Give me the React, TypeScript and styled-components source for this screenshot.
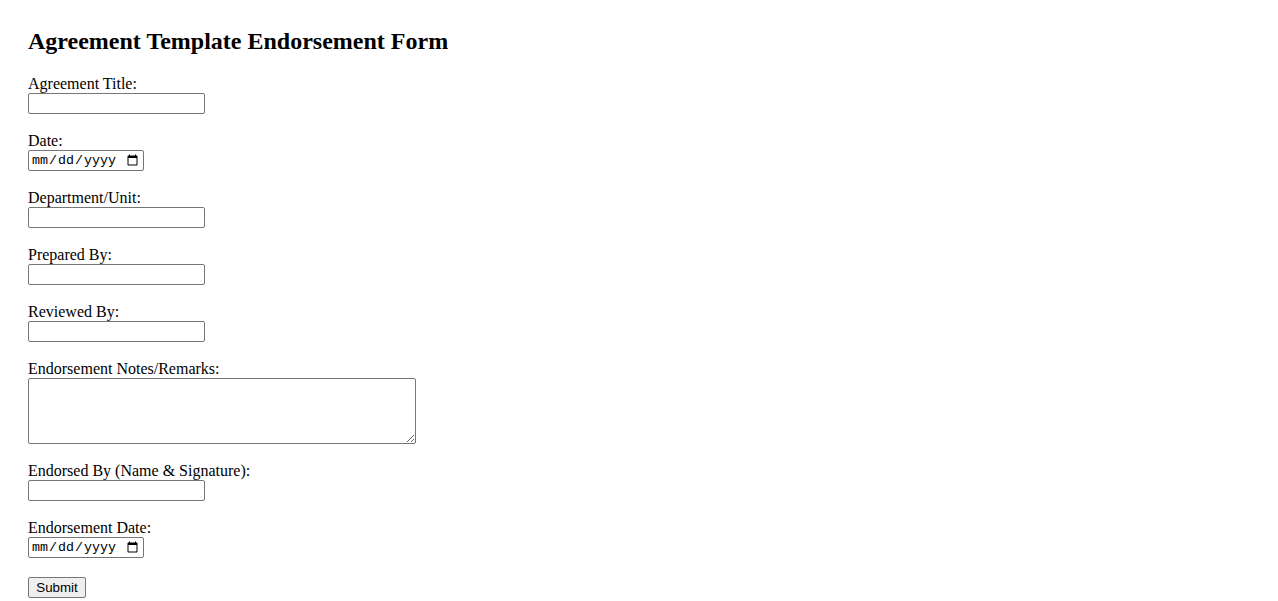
import React from 'react'
import styled, { createGlobalStyle } from 'styled-components'

const GlobalStyle = createGlobalStyle`
  html, body {
    margin: 0;
    padding: 0;
    background: #ffffff;
  }
  body {
    font-family: "Liberation Serif", "Times New Roman", serif;
    font-size: 16px;
    color: #000000;
  }
`

type Field = {
  id: string,
  label: string,
  kind: 'text' | 'date' | 'textarea'
}

const fields: Field[] = [
  { id: 'title', label: 'Agreement Title:', kind: 'text' },
  { id: 'date', label: 'Date:', kind: 'date' },
  { id: 'department', label: 'Department/Unit:', kind: 'text' },
  { id: 'prepared', label: 'Prepared By:', kind: 'text' },
  { id: 'reviewed', label: 'Reviewed By:', kind: 'text' },
  { id: 'notes', label: 'Endorsement Notes/Remarks:', kind: 'textarea' },
  { id: 'endorsed', label: 'Endorsed By (Name & Signature):', kind: 'text' },
  { id: 'endorsementDate', label: 'Endorsement Date:', kind: 'date' }
]

export default function App () {
  return (
    <>
      <GlobalStyle />
      <Page>
        <Title>Agreement Template Endorsement Form</Title>
        <Form onSubmit={e => e.preventDefault()}>
          {
            fields.map(field => (
              <FormControl key={field.id}>
                <Label htmlFor={field.id}>{field.label}</Label>
                {
                  field.kind === 'textarea'
                    ? <TextArea id={field.id} name={field.id} />
                    : <Input id={field.id} name={field.id} type={field.kind} $kind={field.kind} />
                }
              </FormControl>
            ))
          }
          <ButtonRow>
            <SubmitButton type="submit">Submit</SubmitButton>
          </ButtonRow>
        </Form>
      </Page>
    </>
  )
}

const Page = styled.div`
  padding: 28px 28px 20px;
`

const Title = styled.h2`
  margin: 0 0 20px;
  font-size: 24px;
  font-weight: bold;
  line-height: 27px;
`

const Form = styled.form`
  display: flex;
  flex-direction: column;
  align-items: flex-start;
`

const FormControl = styled.div`
  display: flex;
  flex-direction: column;
  align-items: flex-start;
  margin-bottom: 18px;
`

const Label = styled.label`
  display: block;
  line-height: 18px;
  height: 18px;
`

const Input = styled.input<{ $kind: 'text' | 'date' }>`
  box-sizing: border-box;
  width: ${p => (p.$kind === 'date' ? '116px' : '177px')};
  height: 21px;
  margin: 0;
  padding: 1px 2px;
  border: 1px solid #767676;
  border-radius: 2px;
  font-family: ${p => (p.$kind === 'date' ? '"Liberation Mono", monospace' : '"Liberation Sans", Arial, sans-serif')};
  font-size: 13.33px;
  background: #ffffff;
`

const TextArea = styled.textarea`
  box-sizing: border-box;
  width: 388px;
  height: 66px;
  margin: 0;
  padding: 2px;
  border: 1px solid #767676;
  border-radius: 2px;
  font-family: "Liberation Mono", monospace;
  font-size: 13.33px;
`

const ButtonRow = styled.div`
  padding-top: 1px;
`

const SubmitButton = styled.button`
  box-sizing: border-box;
  width: 58px;
  height: 21px;
  margin: 0;
  padding: 1px 6px;
  border: 1px solid #767676;
  border-radius: 2px;
  background: #efefef;
  font-family: "Liberation Sans", Arial, sans-serif;
  font-size: 13.33px;
  color: #000000;
`
